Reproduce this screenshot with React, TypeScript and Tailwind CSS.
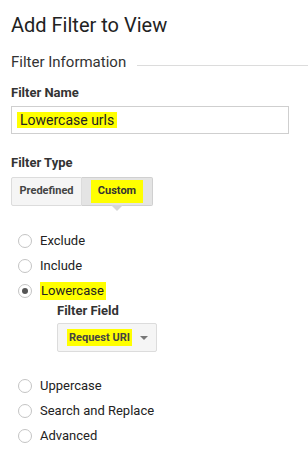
import React from 'react';

const hl = 'bg-[#ffff00]';

function Radio({ label, checked, highlight }: { label: string; checked?: boolean; highlight?: boolean }) {
  return (
    <div className="flex h-[25px] items-center">
      <span className="ml-[7px] flex h-[14px] w-[14px] items-center justify-center rounded-full border border-[#c4c4c4] bg-white">
        {checked && <span className="h-[6px] w-[6px] rounded-full bg-[#555]" />}
      </span>
      <span className={`ml-[8px] text-[13px] leading-[18px] text-[#222] ${highlight ? `${hl} -ml-[1px] pl-[1px] pr-[2px]` : ''}`}>
        {label}
      </span>
    </div>
  );
}

export default function App() {
  return (
    <div className="h-[462px] w-[308px] overflow-hidden bg-white px-[11px] pt-[13px] font-['Roboto',sans-serif] text-[#222]">
      <h1 className="text-[20px] leading-[24px]">Add Filter to View</h1>

      <div className="mt-[15px] flex">
        <span className="text-[15px] leading-[20px] text-[#333]">Filter Information</span>
        <div className="mb-[6px] ml-[11px] mr-[-11px] h-px flex-1 self-end bg-[#dcdcdc]" />
      </div>

      <div className="mt-[12px] text-[13px] font-bold leading-[18px] text-[#333]">Filter Name</div>
      <div className="mt-[4px] flex h-[28px] w-[278px] items-center border border-[#cfcfcf] pl-[5px]">
        <span className={`${hl} px-[3px] text-[14px] leading-[16px] text-[#222]`}>Lowercase urls</span>
      </div>

      <div className="mt-[20px] text-[13px] font-bold leading-[18px] text-[#333]">Filter Type</div>
      <div className="mt-[5px] flex">
        <div className="flex h-[29px] w-[71px] items-center justify-center rounded-l-[2px] border border-[#dcdcdc] bg-[#f5f5f5] text-[11px] font-bold text-[#444]">
          Predefined
        </div>
        <div className="relative flex h-[29px] w-[71px] items-center justify-center rounded-r-[2px] border border-l-0 border-[#d0d0d0] bg-[#e4e4e4] text-[11px] font-bold text-[#333]">
          <span className={`${hl} px-[7px] py-[3px]`}>Custom</span>
          <span className="absolute left-1/2 top-full -ml-[6px] h-0 w-0 border-l-[6px] border-r-[6px] border-t-[6px] border-l-transparent border-r-transparent border-t-[#d6d6d6]" />
        </div>
      </div>

      <div className="mt-[22px]">
        <Radio label="Exclude" />
        <Radio label="Include" />
        <Radio label="Lowercase" checked highlight />
      </div>
      <div className="pl-[46px]">
        <div className="text-[13px] font-bold leading-[16px] text-[#333]">Filter Field</div>
        <div className="mt-[4px] flex h-[29px] w-[100px] items-center justify-between rounded-[2px] border border-[#dcdcdc] bg-[#f5f5f5] pl-[9px] pr-[8px]">
          <span className={`${hl} px-[2px] py-[2px] text-[11px] font-bold leading-[13px] text-[#444]`}>Request URI</span>
          <span className="h-0 w-0 border-l-[4px] border-r-[4px] border-t-[4px] border-l-transparent border-r-transparent border-t-[#777]" />
        </div>
      </div>

      <div className="mt-[21px]">
        <Radio label="Uppercase" />
        <Radio label="Search and Replace" />
        <Radio label="Advanced" />
      </div>
    </div>
  );
}
